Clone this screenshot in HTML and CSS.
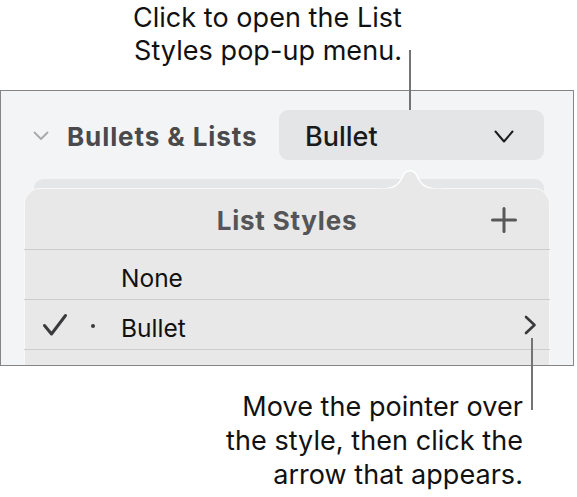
FILE: index.html
```html
<!DOCTYPE html>
<html>
<head>
<meta charset="utf-8">
<link rel="stylesheet" href="styles.css">
</head>
<body>
<div class="page">
  <div class="callout callout-top">Click to open the List<br>Styles pop-up menu.</div>
  <div class="panel">
    <div class="section-head">
      <svg class="disclosure" width="16" height="10" viewBox="0 0 16 10"><path d="M1.5 1.5 L8 8 L14.5 1.5" fill="none" stroke="#a9a9ab" stroke-width="1.8" stroke-linecap="round" stroke-linejoin="round"/></svg>
      <span class="section-title">Bullets &amp; Lists</span>
      <div class="dropdown">
        <span class="dropdown-label">Bullet</span>
        <svg class="dropdown-chev" width="20" height="14" viewBox="0 0 20 14"><path d="M1.5 1.5 L10 11.5 L18.5 1.5" fill="none" stroke="#1d1d1f" stroke-width="2" stroke-linecap="round" stroke-linejoin="round"/></svg>
      </div>
    </div>
    <div class="back-card"></div>
    <div class="popover">
      <svg class="pop-arrow" width="64" height="24" viewBox="0 0 64 24"><path d="M0 23 C14 23 20 21 25 10 C28 3 36 3 39 10 C44 21 50 23 64 23" fill="#e8e8e8" stroke="#ffffff" stroke-width="1.4"/><rect x="0" y="22.5" width="64" height="2" fill="#e8e8e8"/></svg>
      <div class="pop-head">
        <span class="pop-title">List Styles</span>
        <svg class="plus" width="26" height="26" viewBox="0 0 26 26"><path d="M13 1.5 V24.5 M1.5 13 H24.5" stroke="#58585a" stroke-width="3" stroke-linecap="round"/></svg>
      </div>
      <div class="row"><span class="row-label">None</span></div>
      <div class="row">
        <svg class="check" width="26" height="24" viewBox="0 0 26 24"><path d="M2.5 12.5 L9.5 21 L23.5 2.5" fill="none" stroke="#3a3a3c" stroke-width="3" stroke-linecap="round" stroke-linejoin="round"/></svg>
        <span class="dot"></span>
        <span class="row-label">Bullet</span>
        <svg class="row-chev" width="13" height="20" viewBox="0 0 13 20"><path d="M2 2 L10.5 10 L2 18" fill="none" stroke="#3a3a3c" stroke-width="2.6" stroke-linecap="round" stroke-linejoin="round"/></svg>
      </div>
      <div class="row"></div>
    </div>
  </div>
  <div class="callout callout-bottom">Move the pointer over<br>the style, then click the<br>arrow that appears.</div>
  <div class="leader leader-top"></div>
  <div class="leader leader-bottom"></div>
</div>
</body>
</html>
```
FILE: styles.css
```css
* { box-sizing: border-box; }
html, body { margin: 0; padding: 0; background: #ffffff; }
body { font-family: Inter, "Noto Sans", "Liberation Sans", sans-serif; }
.page { position: relative; width: 577px; height: 497px; overflow: hidden; }

.callout { color: #111111; font-size: 27px; line-height: 33px; text-align: right; letter-spacing: 0.05px; }
.callout-top { height: 90px; width: 402px; padding-top: 1px; }
.callout-bottom { width: 523px; margin-top: 24px; line-height: 34px; }

.panel {
  position: relative;
  width: 574px;
  height: 276px;
  background: #f3f4f6;
  border: 1px solid #858585;
  overflow: hidden;
}

.section-head { display: flex; align-items: center; height: 69px; padding-top: 19px; }
.disclosure { margin-left: 32px; margin-top: 2px; }
.section-title { margin-left: 18px; padding-top: 2px; font-size: 26px; font-weight: 700; color: #4a4a4c; letter-spacing: 0.9px; }
.dropdown {
  margin-left: auto; margin-right: 29px;
  width: 265px; height: 50px; border-radius: 9px;
  background: #e4e5e7;
  display: flex; align-items: center; justify-content: space-between;
  padding: 0 30px 0 26px;
}
.dropdown-label { font-size: 27px; font-weight: 500; color: #1a1a1a; padding-top: 2px; }
.dropdown-chev { margin-top: 3px; }

.back-card { margin: 19px 0 0 33px; width: 510px; height: 200px; border-radius: 9px; background: #e5e6e8; }

.popover {
  position: absolute; left: 23px; top: 97px;
  width: 526px; height: 220px;
  background: #e8e8e8;
  border: 1px solid rgba(255,255,255,0.7);
  border-radius: 16px;
}
.pop-arrow { position: absolute; left: 353px; top: -23px; }

.pop-head { position: relative; height: 61px; display: flex; align-items: center; justify-content: center; border-bottom: 1px solid #cdcdcd; margin: 0 -1px; }
.pop-title { font-size: 26px; font-weight: 700; color: #555557; padding-top: 2px; letter-spacing: 0.8px; }
.plus { position: absolute; right: 33px; top: 18px; }

.row { position: relative; height: 50px; border-bottom: 1px solid #cdcdcd; margin: 0 -1px; }
.row-label { position: absolute; left: 97px; top: 13px; font-size: 24.5px; font-weight: 400; color: #111111; }
.check { position: absolute; left: 18px; top: 13px; }
.dot { position: absolute; left: 67px; top: 24px; width: 4px; height: 4px; border-radius: 50%; background: #3a3a3c; }
.row-chev { position: absolute; left: 500px; top: 15px; }

.leader { position: absolute; width: 2px; background: #747474; }
.leader-top { left: 409px; top: 50px; height: 60px; }
.leader-bottom { left: 531px; top: 338px; height: 72px; }
```
